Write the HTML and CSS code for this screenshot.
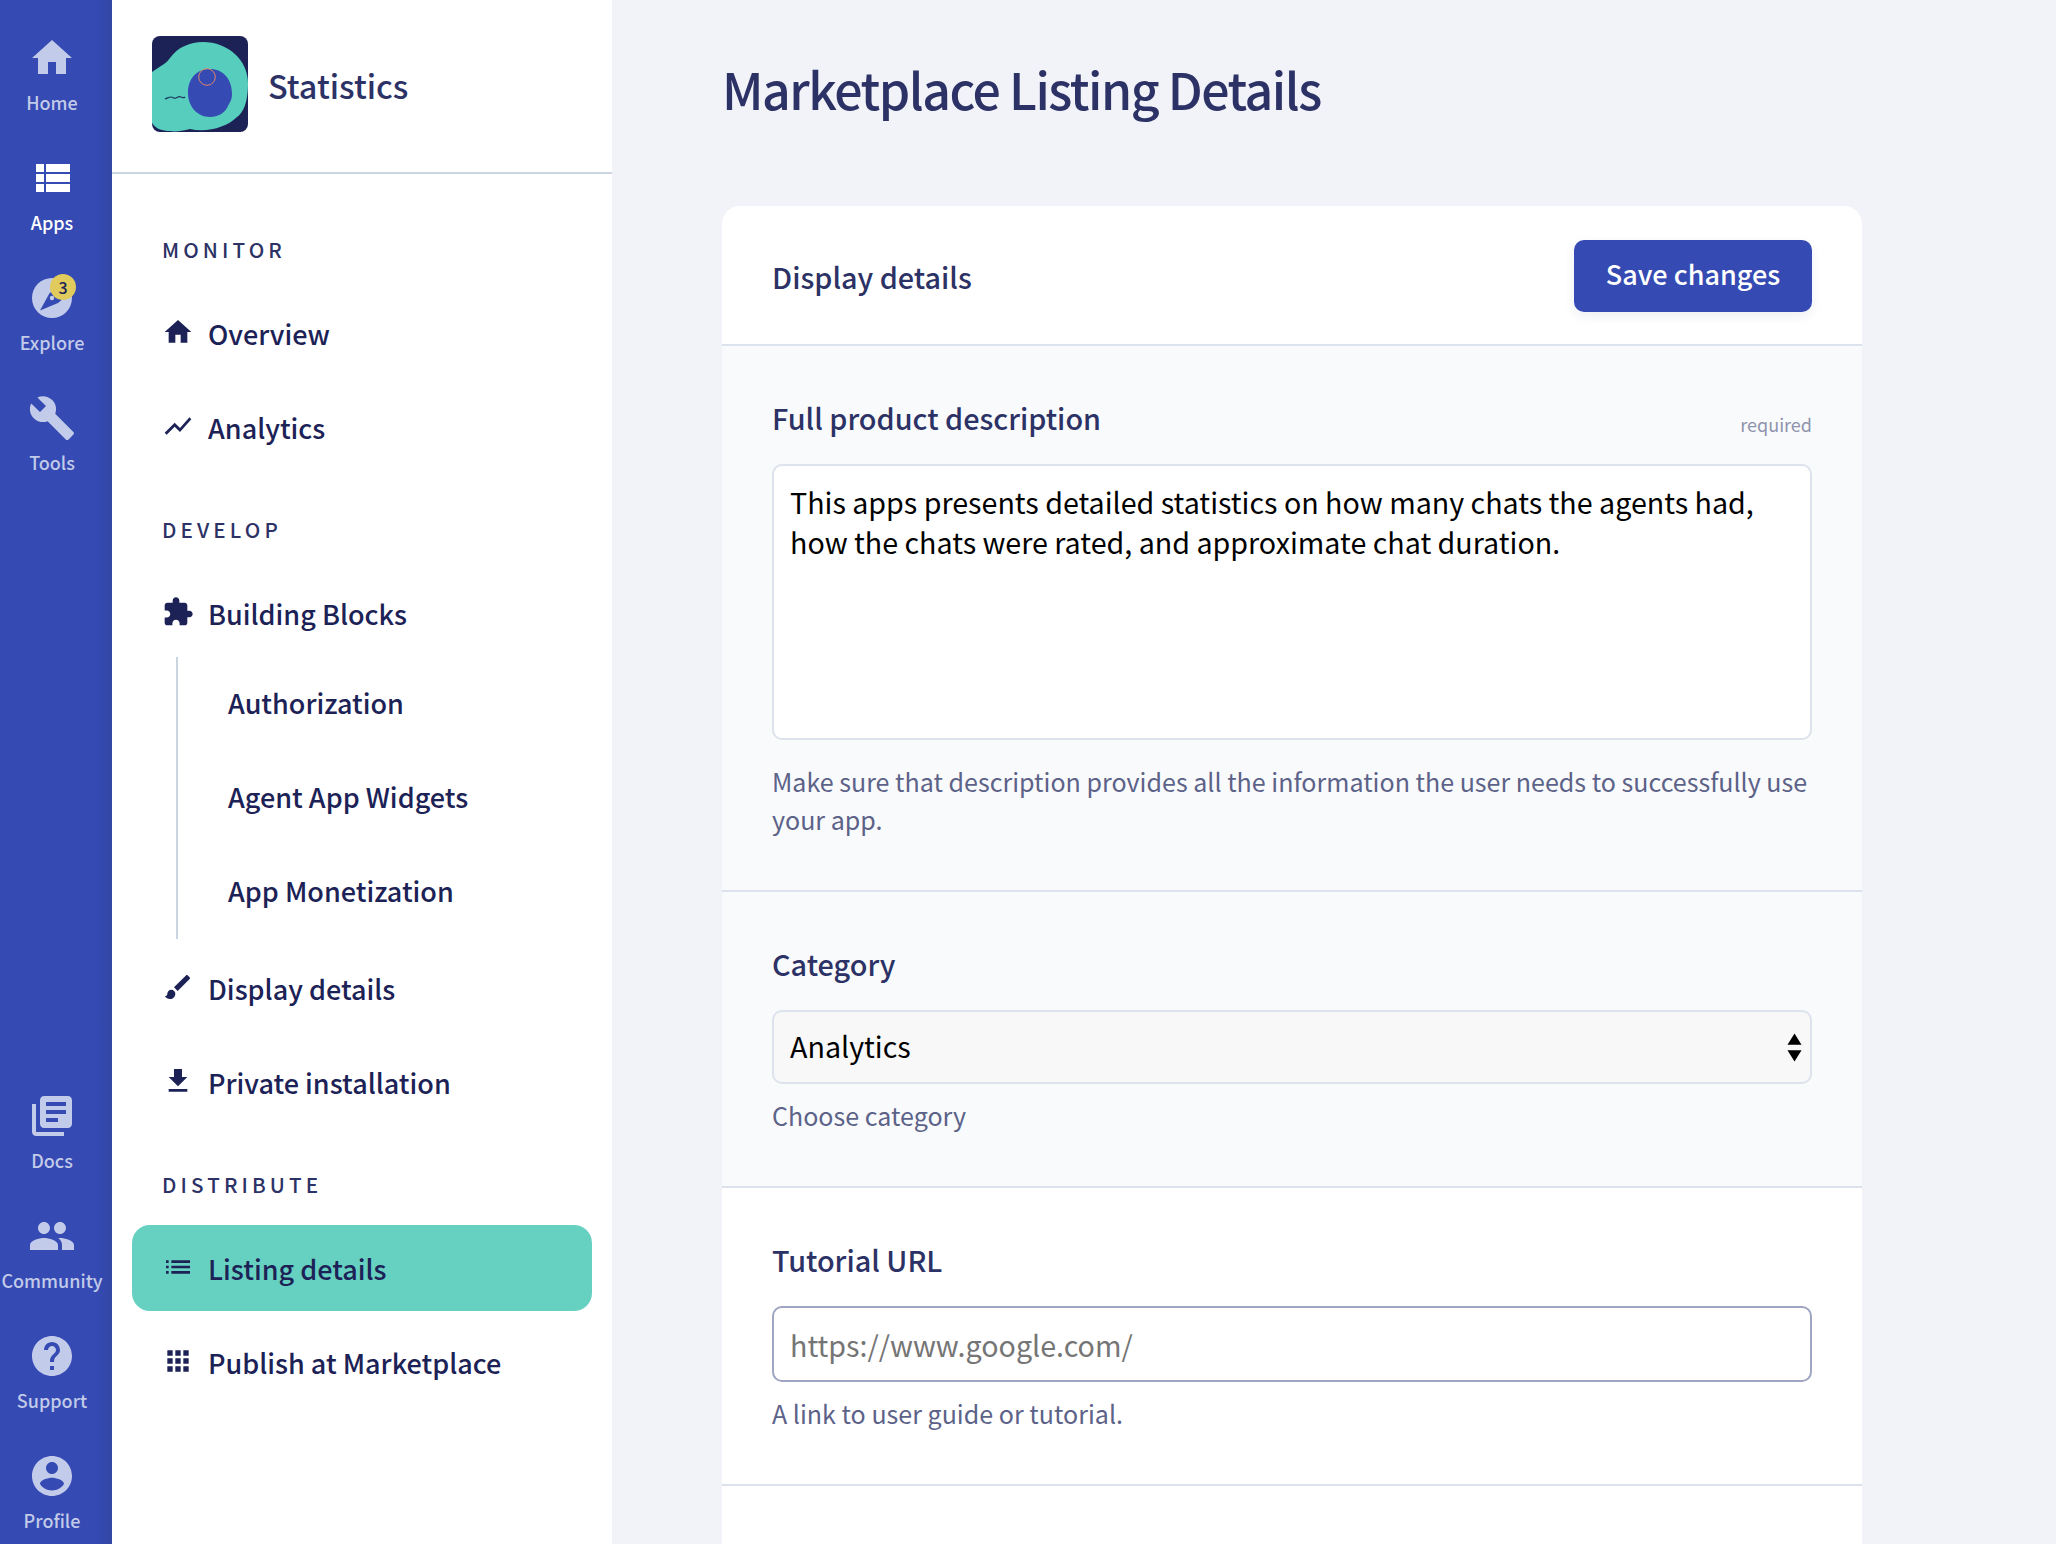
FILE: index.html
```html
<!DOCTYPE html>
<html lang="en">
<head>
<meta charset="utf-8">
<title>Marketplace Listing Details</title>
<link rel="stylesheet" href="styles.css">
</head>
<body>
<div class="app">
  <nav class="rail">
    <div class="rail-group">
      <a class="rail-item"><svg class="rail-icon" viewBox="0 0 24 24"><path d="M10 20v-6h4v6h5v-8h3L12 3 2 12h3v8z"/></svg><span>Home</span></a>
      <a class="rail-item is-current"><svg class="rail-icon" viewBox="0 0 24 24"><path d="M4 14h4v-4H4v4zm0 5h4v-4H4v4zM4 9h4V5H4v4zm5 5h12v-4H9v4zm0 5h12v-4H9v4zM9 5v4h12V5H9z"/></svg><span>Apps</span></a>
      <a class="rail-item"><span class="rail-icon-wrap"><svg class="rail-icon" viewBox="0 0 24 24"><path fill-rule="evenodd" d="M12 2a10 10 0 1 0 0 20 10 10 0 0 0 0-20zM6 18.2l4.8-8.7L17 6l1 6-3 2.5zM12 10.9a1.1 1.1 0 1 0 0 2.2 1.1 1.1 0 0 0 0-2.2z"/></svg><b class="badge">3</b></span><span>Explore</span></a>
      <a class="rail-item"><svg class="rail-icon" viewBox="0 0 24 24"><path d="M22.7 19l-9.1-9.1c.9-2.3.4-5-1.5-6.9-2-2-5-2.4-7.4-1.3L9 6 6 9 1.6 4.7C.4 7.1.9 10.1 2.9 12.1c1.9 1.9 4.6 2.4 6.9 1.5l9.1 9.1c.4.4 1 .4 1.4 0l2.3-2.3c.5-.4.5-1.1.1-1.4z"/></svg><span>Tools</span></a>
    </div>
    <div class="rail-group">
      <a class="rail-item"><svg class="rail-icon" viewBox="0 0 24 24"><path d="M4 6H2v14c0 1.1.9 2 2 2h14v-2H4V6zm16-4H8c-1.1 0-2 .9-2 2v12c0 1.1.9 2 2 2h12c1.1 0 2-.9 2-2V4c0-1.1-.9-2-2-2zm-1 9H9V9h10v2zm-4 4H9v-2h6v2zm4-8H9V5h10v2z"/></svg><span>Docs</span></a>
      <a class="rail-item"><svg class="rail-icon" viewBox="0 0 24 24"><path d="M16 11c1.66 0 2.99-1.34 2.99-3S17.66 5 16 5c-1.66 0-3 1.34-3 3s1.34 3 3 3zm-8 0c1.66 0 2.99-1.34 2.99-3S9.66 5 8 5C6.34 5 5 6.34 5 8s1.34 3 3 3zm0 2c-2.33 0-7 1.17-7 3.5V19h14v-2.5c0-2.33-4.67-3.5-7-3.5zm8 0c-.29 0-.62.02-.97.05 1.16.84 1.97 1.97 1.97 3.45V19h6v-2.5c0-2.33-4.67-3.5-7-3.5z"/></svg><span>Community</span></a>
      <a class="rail-item"><svg class="rail-icon" viewBox="0 0 24 24"><path d="M12 2C6.48 2 2 6.48 2 12s4.48 10 10 10 10-4.48 10-10S17.52 2 12 2zm1 17h-2v-2h2v2zm2.07-7.75l-.9.92C13.45 12.9 13 13.5 13 15h-2v-.5c0-1.1.45-2.1 1.17-2.83l1.24-1.26c.37-.36.59-.86.59-1.41 0-1.1-.9-2-2-2s-2 .9-2 2H8c0-2.21 1.79-4 4-4s4 1.79 4 4c0 .88-.36 1.68-.93 2.25z"/></svg><span>Support</span></a>
      <a class="rail-item"><svg class="rail-icon" viewBox="0 0 24 24"><path d="M12 2C6.48 2 2 6.48 2 12s4.48 10 10 10 10-4.48 10-10S17.52 2 12 2zm0 3c1.66 0 3 1.34 3 3s-1.34 3-3 3-3-1.34-3-3 1.34-3 3-3zm0 14.2c-2.5 0-4.71-1.28-6-3.22.03-1.99 4-3.08 6-3.08 1.99 0 5.97 1.09 6 3.08-1.29 1.94-3.5 3.22-6 3.22z"/></svg><span>Profile</span></a>
    </div>
  </nav>

  <aside class="sidebar">
    <header class="app-head">
      <svg class="logo" viewBox="0 0 96 96">
        <rect width="96" height="96" rx="8" fill="#1c2256"/>
        <path d="M0 36C8 30 14 28 18 22 26 11 38 6 51 6c25 0 45 18 45 41 0 20-5 30-11 34-10 10-30 16-47 12-8 2-15 3-20 2-8 0-14-2-18-8z" fill="#56cdbd"/>
        <path d="M36 57c0-14 8-24 22-24 13 0 22 10 22 25 0 6-2 8-4 12-3 7-10 11-18 11-13 0-22-11-22-24z" fill="#354bb3"/>
        <ellipse cx="55" cy="41" rx="8.3" ry="8.3" fill="none" stroke="#e0846a" stroke-width="1"/>
        <path d="M13 63c3-1 4-2 6-2s3 2 5 1 3-2 5-1 3 1 4 0" fill="none" stroke="#1c3a5e" stroke-width="1.2"/>
      </svg>
      <span class="app-name">Statistics</span>
    </header>
    <div class="menu">
      <h3 class="menu-title">MONITOR</h3>
      <a class="menu-item"><svg class="menu-icon" viewBox="0 0 24 24"><path d="M10 20v-6h4v6h5v-8h3L12 3 2 12h3v8z"/></svg><span>Overview</span></a>
      <a class="menu-item"><svg class="menu-icon" viewBox="0 0 24 24"><path d="M3.5 18.49l6-6.01 4 4L22 6.92l-1.41-1.41-7.09 7.97-4-4L2 16.99z"/></svg><span>Analytics</span></a>
      <h3 class="menu-title">DEVELOP</h3>
      <a class="menu-item"><svg class="menu-icon" viewBox="0 0 24 24"><path d="M20.5 11H19V7c0-1.1-.9-2-2-2h-4V3.5C13 2.12 11.88 1 10.5 1S8 2.12 8 3.5V5H4c-1.1 0-1.99.9-1.99 2v3.8H3.5c1.49 0 2.7 1.21 2.7 2.7s-1.21 2.7-2.7 2.7H2V20c0 1.1.9 2 2 2h3.8v-1.5c0-1.49 1.21-2.7 2.7-2.7 1.49 0 2.7 1.21 2.7 2.7V22H17c1.1 0 2-.9 2-2v-4h1.5c1.38 0 2.5-1.12 2.5-2.5S21.88 11 20.5 11z"/></svg><span>Building Blocks</span></a>
      <div class="submenu">
        <a class="submenu-item">Authorization</a>
        <a class="submenu-item">Agent App Widgets</a>
        <a class="submenu-item">App Monetization</a>
      </div>
      <a class="menu-item"><svg class="menu-icon" viewBox="0 0 24 24"><path d="M7 14c-1.66 0-3 1.34-3 3 0 1.31-1.16 2-2 2 .92 1.22 2.49 2 4 2 2.21 0 4-1.79 4-4 0-1.66-1.34-3-3-3zm13.71-9.37l-1.34-1.34c-.39-.39-1.02-.39-1.41 0L9 12.25 11.75 15l8.96-8.96c.39-.39.39-1.02 0-1.41z"/></svg><span>Display details</span></a>
      <a class="menu-item"><svg class="menu-icon" viewBox="0 0 24 24"><path d="M19 9h-4V3H9v6H5l7 7 7-7zM5 18v2h14v-2H5z"/></svg><span>Private installation</span></a>
      <h3 class="menu-title">DISTRIBUTE</h3>
      <a class="menu-item is-active"><svg class="menu-icon" viewBox="0 0 24 24"><path d="M3 13h2v-2H3v2zm0 4h2v-2H3v2zm0-8h2V7H3v2zm4 4h14v-2H7v2zm0 4h14v-2H7v2zM7 7v2h14V7H7z"/></svg><span>Listing details</span></a>
      <a class="menu-item"><svg class="menu-icon" viewBox="0 0 24 24"><path d="M4 8h4V4H4v4zm6 12h4v-4h-4v4zm-6 0h4v-4H4v4zm0-6h4v-4H4v4zm6 0h4v-4h-4v4zm6-10v4h4V4h-4zm-6 4h4V4h-4v4zm6 6h4v-4h-4v4zm0 6h4v-4h-4v4z"/></svg><span>Publish at Marketplace</span></a>
    </div>
  </aside>

  <main class="content">
    <h1 class="page-title">Marketplace Listing Details</h1>
    <section class="card">
      <header class="card-head">
        <h2 class="card-title">Display details</h2>
        <button class="btn" type="button">Save changes</button>
      </header>
      <div class="field field-desc field-tinted">
        <div class="field-top">
          <label class="field-label">Full product description</label>
          <span class="field-note">required</span>
        </div>
        <textarea class="textarea" rows="5">This apps presents detailed statistics on how many chats the agents had, how the chats were rated, and approximate chat duration.</textarea>
        <p class="field-help">Make sure that description provides all the information the user needs to successfully use your app.</p>
      </div>
      <div class="field field-cat field-tinted">
        <div class="field-top"><label class="field-label">Category</label></div>
        <div class="select-wrap">
          <select class="select"><option>Analytics</option></select>
          <svg class="select-arrows" viewBox="0 0 16 30"><path d="M8 0l7.5 12H.5zM.5 18h15L8 30z"/></svg>
        </div>
        <p class="field-help">Choose category</p>
      </div>
      <div class="field field-url">
        <div class="field-top"><label class="field-label">Tutorial URL</label></div>
        <input class="input" type="text" placeholder="https://www.google.com/">
        <p class="field-help">A link to user guide or tutorial.</p>
      </div>
    </section>
  </main>
</div>
</body>
</html>
```

FILE: styles.css
```css
* { box-sizing: border-box; }
html, body { margin: 0; height: 100%; overflow: hidden; }
body {
  font-family: "Noto Sans CJK JP", "Open Sans", sans-serif;
  color: #1c2256;
  background: #f1f3f9;
}
.app { display: flex; height: 1544px; overflow: hidden; }

.rail {
  width: 112px;
  flex: none;
  padding-right: 8px;
  display: flex;
  flex-direction: column;
  justify-content: space-between;
  background: linear-gradient(90deg, #354ab3 85%, #3247a5 100%);
}
.rail-item {
  height: 120px;
  padding-top: 34px;
  display: flex;
  flex-direction: column;
  align-items: center;
  gap: 8px;
  font-size: 18px;
  line-height: 24px;
  font-weight: 500;
  color: #c2cbe9;
  white-space: nowrap;
}
.rail-group:last-child .rail-item { padding-top: 28px; }
.rail-item.is-current { color: #fff; }
.rail-icon { width: 48px; height: 48px; fill: currentColor; display: block; }
.rail-icon-wrap { position: relative; display: block; width: 48px; height: 48px; }
.badge {
  position: absolute;
  top: 0;
  right: 0;
  width: 26px;
  height: 26px;
  border-radius: 50%;
  background: #e1cb5d;
  color: #1c2256;
  font-size: 16px;
  font-weight: 500;
  line-height: 26px;
  text-align: center;
}

.sidebar { width: 500px; flex: none; background: #fff; }
.app-head {
  height: 174px;
  padding: 36px 40px 40px;
  display: flex;
  align-items: center;
  gap: 20px;
  border-bottom: 2px solid #cbd5e1;
}
.logo { width: 96px; height: 96px; flex: none; }
.app-name { font-size: 32.4px; font-weight: 500; color: #2c3265; }
.menu { padding: 0 20px; }
.menu-title {
  margin: 0;
  height: 56px;
  padding: 0 0 0 30px;
  display: flex;
  align-items: center;
  font-size: 20.6px;
  font-weight: 500;
  letter-spacing: 0.2em;
  color: #2c3265;
}
.menu-title:first-child { margin-top: 47px; margin-bottom: 13px; }
.menu-item + .menu-title { margin-top: 31px; margin-bottom: 13px; }
.menu-item {
  height: 86px;
  margin-bottom: 8px;
  padding-left: 30px;
  display: flex;
  align-items: center;
  gap: 14px;
  border-radius: 18px;
  font-size: 27px;
  font-weight: 500;
}
.menu-item.is-active { background: #67d1c1; }
.menu-icon { width: 32px; height: 32px; fill: #1c2256; flex: none; margin-top: -3px; }
.submenu {
  margin: -7px 0 6px 44px;
  padding: 10px 0 13px;
  border-left: 2px solid #cbd5e1;
  display: flex;
  flex-direction: column;
  gap: 23px;
}
.submenu-item {
  height: 71px;
  padding-left: 50px;
  display: flex;
  align-items: center;
  font-size: 27px;
  font-weight: 500;
}

.content { flex: 1; padding: 0 194px 0 110px; }
.page-title {
  margin: 0;
  height: 206px;
  padding-top: 52px;
  font-size: 50px;
  line-height: 72px;
  font-weight: 500;
  letter-spacing: -1.5px;
  color: #2c3265;
}
.card { background: #fff; border-radius: 18px 18px 0 0; padding-bottom: 100px; }
.card-head {
  height: 138px;
  padding: 34px 50px 32px;
  display: flex;
  justify-content: space-between;
  align-items: center;
}
.card-title { margin: 0; font-size: 28.8px; font-weight: 500; color: #2c3265; }
.btn {
  width: 238px;
  height: 72px;
  padding: 0 0 6px;
  border: 0;
  border-radius: 10px;
  background: #354bb3;
  color: #fff;
  font: inherit;
  font-size: 27px;
  font-weight: 500;
  box-shadow: 0 4px 12px rgba(28, 34, 86, 0.08);
}
.field {
  padding: 50px 50px 0;
  border-top: 2px solid #dde3ec;
}
.field-tinted { background: #f9fafc; }
.field-desc { height: 546px; }
.field-cat { height: 296px; }
.field-url { height: 300px; border-bottom: 2px solid #dde3ec; }
.field-top {
  height: 42px;
  margin-bottom: 26px;
  display: flex;
  justify-content: space-between;
  align-items: center;
}
.field-label { font-size: 28.8px; font-weight: 500; color: #2c3265; }
.field-note { font-size: 18px; color: #8f93ad; padding-top: 14px; }
.textarea, .input, .select {
  display: block;
  width: 100%;
  font-family: inherit;
  font-size: 28.65px;
  color: #000;
  border-radius: 10px;
  outline: 0;
  appearance: none;
}
.textarea {
  height: 276px;
  padding: 16px 16px;
  border: 2px solid #dde3ec;
  background: #fff;
  line-height: 40px;
  resize: none;
  overflow: hidden;
}
.select-wrap { position: relative; }
.select {
  height: 74px;
  padding: 0 16px 4px;
  border: 2px solid #dde3ec;
  background: #f8f8f8;
}
.select-arrows {
  position: absolute;
  top: 23px;
  right: 10px;
  width: 15px;
  height: 29px;
  fill: #000;
  pointer-events: none;
}
.input {
  height: 76px;
  padding: 0 16px;
  border: 2px solid #a0a5c2;
  background: #fff;
}
.input::placeholder { color: #757575; }
.field-help {
  margin: 22px 0 0;
  font-size: 25.05px;
  line-height: 38px;
  color: #5c6288;
}
.select-wrap + .field-help { margin-top: 12px; }
.input + .field-help { margin-top: 12px; }
```
